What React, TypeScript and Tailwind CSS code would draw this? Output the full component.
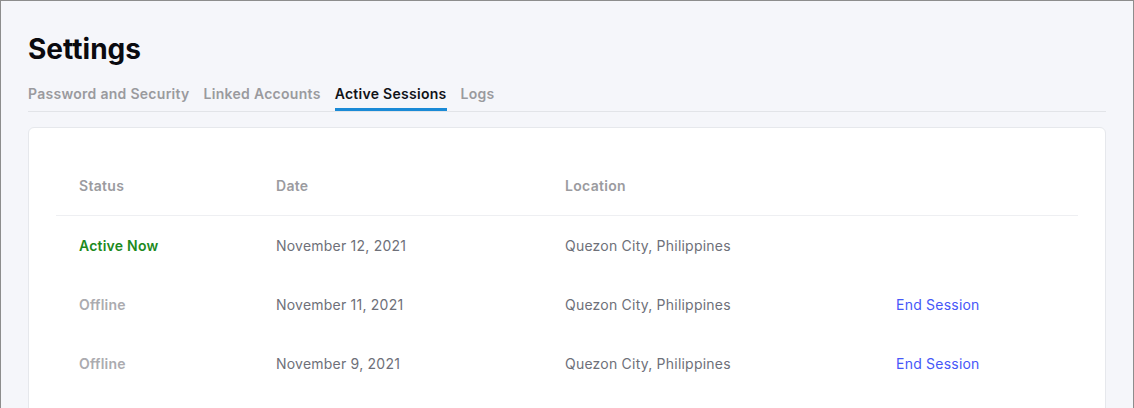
const tabs = ["Password and Security", "Linked Accounts", "Active Sessions", "Logs"]

const sessions = [
    { status: "Active Now", active: true, date: "November 12, 2021", location: "Quezon City, Philippines" },
    { status: "Offline", active: false, date: "November 11, 2021", location: "Quezon City, Philippines" },
    { status: "Offline", active: false, date: "November 9, 2021", location: "Quezon City, Philippines" },
]

export default function App() {
    return (
        <div
            className="min-h-screen border border-[#8d8d8d] bg-[#f5f6fa] px-[27px] pt-[31px]"
            style={{ fontFamily: "Inter, 'Noto Sans', sans-serif" }}
        >
            <h1 className="text-[28px] leading-[34px] font-bold text-[#0a0a0f]">Settings</h1>

            {/* Tabs */}
            <div className="mt-[18px] flex gap-[14px] border-b border-[#e2e4e8]">
                {tabs.map((tab) => (
                    <button
                        key={tab}
                        className={
                            tab === "Active Sessions"
                                ? "pb-[4px] border-b-[3px] border-[#1a8ad6] text-sm leading-5 font-semibold tracking-[0.28px] text-[#111318]"
                                : "pb-[7px] text-sm leading-5 font-semibold tracking-[0.28px] text-[#9a9a9e]"
                        }
                    >
                        {tab}
                    </button>
                ))}
            </div>

            {/* Sessions Card */}
            <div className="mt-[15px] rounded-md border border-[#e6e8ec] bg-white px-[27px] pt-[28px] pb-6">
                <div className="grid h-[60px] grid-cols-[197px_289px_331px_1fr] items-center border-b border-[#eeeff2] text-sm font-semibold tracking-[0.3px] text-[#9b9b9f]">
                    <div className="pl-[23px]">Status</div>
                    <div className="pl-[23px]">Date</div>
                    <div className="pl-[23px]">Location</div>
                    <div />
                </div>
                {sessions.map((s) => (
                    <div
                        key={s.date}
                        className="grid h-[59px] grid-cols-[197px_289px_331px_1fr] items-center text-sm tracking-[0.22px]"
                    >
                        <div className={s.active ? "pl-[23px] font-semibold text-[#1d8a1d]" : "pl-[23px] font-semibold text-[#ababaf]"}>
                            {s.status}
                        </div>
                        <div className="pl-[23px] text-[#6e7079]">{s.date}</div>
                        <div className="pl-[23px] text-[#6e7079]">{s.location}</div>
                        <div className="pl-[23px]">
                            {!s.active && <button className="text-[#4657f8]">End Session</button>}
                        </div>
                    </div>
                ))}
            </div>
        </div>
    )
}
